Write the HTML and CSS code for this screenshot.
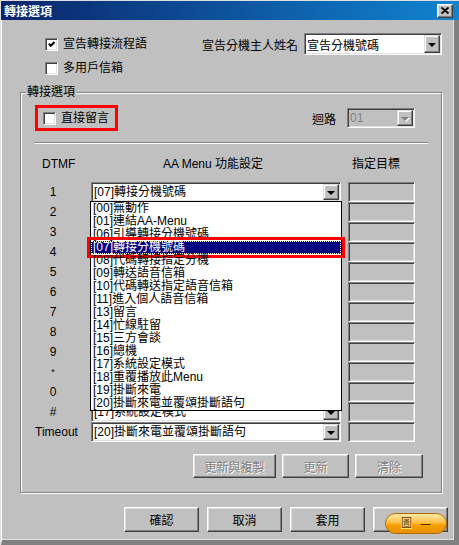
FILE: index.html
```html
<!DOCTYPE html>
<html lang="zh-Hant">
<head>
    <meta charset="UTF-8">
    <title>轉接選項</title>
    <link rel="stylesheet" href="styles.css">
</head>
<body>

    <div class="window">
        <div class="titlebar">
            <span>轉接選項</span>
            <span class="close-btn">
                <svg width="8" height="7" viewBox="0 0 8 7"><path d="M0.5 0.5L7.5 6.5M7.5 0.5L0.5 6.5" stroke="#000" stroke-width="1.8"/></svg>
            </span>
        </div>

        <div class="client">
            <div class="top-row">
                <label class="check">
                    <span class="box"><svg width="7" height="7" viewBox="0 0 7 7"><polyline points="0.8,2.8 2.8,4.8 6.5,1" fill="none" stroke="#000" stroke-width="2"/></svg></span>
                    宣告轉接流程語
                </label>
                <div class="name-field">
                    <span>宣告分機主人姓名</span>
                    <div class="combo combo-name">
                        <span class="combo-text">宣告分機號碼</span>
                        <span class="drop"><i class="arrow"></i></span>
                    </div>
                </div>
            </div>
            <div class="top-row2">
                <label class="check"><span class="box"></span>多用戶信箱</label>
            </div>

            <fieldset class="group">
                <legend>轉接選項</legend>

                <div class="opt-row">
                    <label class="check highlight"><span class="box"></span>直接留言</label>
                    <div class="loop">
                        <span>迴路</span>
                        <div class="combo combo-loop disabled">
                            <span class="combo-text">01</span>
                            <span class="drop"><i class="arrow"></i></span>
                        </div>
                    </div>
                </div>

                <div class="sep"></div>

                <div class="grid-head">
                    <span class="head-dtmf">DTMF</span>
                    <span class="head-menu">AA Menu 功能設定</span>
                    <span class="head-target">指定目標</span>
                </div>

                <div class="rows">
                    <div class="row"><span class="dtmf">1</span><div class="combo"><span class="combo-text">[07]轉接分機號碼</span><span class="drop"><i class="arrow"></i></span></div><span class="target"></span></div>
                    <div class="row"><span class="dtmf">2</span><div class="combo"><span class="combo-text">[00]無動作</span><span class="drop"><i class="arrow"></i></span></div><span class="target"></span></div>
                    <div class="row"><span class="dtmf">3</span><div class="combo"><span class="combo-text">[00]無動作</span><span class="drop"><i class="arrow"></i></span></div><span class="target"></span></div>
                    <div class="row"><span class="dtmf">4</span><div class="combo"><span class="combo-text">[00]無動作</span><span class="drop"><i class="arrow"></i></span></div><span class="target"></span></div>
                    <div class="row"><span class="dtmf">5</span><div class="combo"><span class="combo-text">[00]無動作</span><span class="drop"><i class="arrow"></i></span></div><span class="target"></span></div>
                    <div class="row"><span class="dtmf">6</span><div class="combo"><span class="combo-text">[00]無動作</span><span class="drop"><i class="arrow"></i></span></div><span class="target"></span></div>
                    <div class="row"><span class="dtmf">7</span><div class="combo"><span class="combo-text">[00]無動作</span><span class="drop"><i class="arrow"></i></span></div><span class="target"></span></div>
                    <div class="row"><span class="dtmf">8</span><div class="combo"><span class="combo-text">[00]無動作</span><span class="drop"><i class="arrow"></i></span></div><span class="target"></span></div>
                    <div class="row"><span class="dtmf">9</span><div class="combo"><span class="combo-text">[00]無動作</span><span class="drop"><i class="arrow"></i></span></div><span class="target"></span></div>
                    <div class="row"><span class="dtmf star">*</span><div class="combo"><span class="combo-text">[00]無動作</span><span class="drop"><i class="arrow"></i></span></div><span class="target"></span></div>
                    <div class="row"><span class="dtmf">0</span><div class="combo"><span class="combo-text">[00]無動作</span><span class="drop"><i class="arrow"></i></span></div><span class="target"></span></div>
                    <div class="row"><span class="dtmf">#</span><div class="combo"><span class="combo-text">[17]系統設定模式</span><span class="drop"><i class="arrow"></i></span></div><span class="target"></span></div>
                    <div class="row"><span class="dtmf">Timeout</span><div class="combo"><span class="combo-text">[20]掛斷來電並覆頌掛斷語句</span><span class="drop"><i class="arrow"></i></span></div><span class="target"></span></div>

                    <!-- opened dropdown of row 1 -->
                    <div class="menu-list">
                        <div>[00]無動作</div>
                        <div>[01]連結AA-Menu</div>
                        <div>[06]引導轉接分機號碼</div>
                        <div class="selected">[07]轉接分機號碼</div>
                        <div>[08]代碼轉接指定分機</div>
                        <div>[09]轉送語音信箱</div>
                        <div>[10]代碼轉送指定語音信箱</div>
                        <div>[11]進入個人語音信箱</div>
                        <div>[13]留言</div>
                        <div>[14]忙線駐留</div>
                        <div>[15]三方會談</div>
                        <div>[16]總機</div>
                        <div>[17]系統設定模式</div>
                        <div>[18]重覆播放此Menu</div>
                        <div>[19]掛斷來電</div>
                        <div>[20]掛斷來電並覆頌掛斷語句</div>
                    </div>
                </div>

                <div class="actions">
                    <button class="btn disabled w-copy">更新與複製</button>
                    <button class="btn disabled w-update">更新</button>
                    <button class="btn disabled w-clear">清除</button>
                </div>
            </fieldset>

            <div class="dialog-buttons">
                <button class="btn">確認</button>
                <button class="btn">取消</button>
                <button class="btn">套用</button>
                <button class="btn fig-btn"><span class="pill"><span class="pill-icon">圖</span>一</span></button>
            </div>
        </div>
    </div>

</body>
</html>
```

FILE: styles.css
```css
body {
    margin: 0;
    font-family: "Liberation Sans", "Noto Sans CJK TC", sans-serif;
    font-size: 12px;
    color: #000;
}
.window {
    width: 459px;
    height: 545px;
    box-sizing: border-box;
    border-top: 1px solid #dfdfdf;
    border-left: 1px solid #dfdfdf;
    background: #c0c0c0;
    display: flex;
    flex-direction: column;
}
.titlebar {
    flex: none;
    height: 19px;
    display: flex;
    align-items: center;
    justify-content: space-between;
    padding: 0 6px 0 3px;
    background: linear-gradient(to right, #0a246a, #1084d0);
    color: #fff;
    font-weight: bold;
}
.close-btn {
    width: 16px;
    height: 14px;
    box-sizing: border-box;
    display: flex;
    align-items: center;
    justify-content: center;
    background: #c0c0c0;
    border: 1px solid;
    border-color: #fff #404040 #404040 #fff;
    box-shadow: inset -1px -1px #808080, inset 1px 1px #dfdfdf;
}
.client {
    flex: 1;
    display: flex;
    flex-direction: column;
    border-left: 1px solid #fff;
    border-right: 5px solid #808080;
    border-bottom: 5px solid #808080;
    box-shadow: inset -1px -1px #dfdfdf;
}

/* checkbox + combo */
.check {
    display: flex;
    align-items: center;
    gap: 5px;
    line-height: 14px;
    white-space: nowrap;
}
.box {
    flex: none;
    width: 13px;
    height: 13px;
    box-sizing: border-box;
    display: flex;
    align-items: center;
    justify-content: center;
    background: #fff;
    border: 1px solid;
    border-color: #808080 #fff #fff #808080;
    box-shadow: inset 1px 1px #404040, inset -1px -1px #dfdfdf;
}
.combo {
    box-sizing: border-box;
    display: flex;
    align-items: stretch;
    background: #fff;
    border: 1px solid;
    border-color: #808080 #fff #fff #808080;
    box-shadow: inset 1px 1px #404040, inset -1px -1px #dfdfdf;
    padding: 1px;
    white-space: nowrap;
    overflow: hidden;
}
.combo-text {
    flex: 1;
    display: flex;
    align-items: center;
    padding-left: 1px;
    overflow: hidden;
}
.drop {
    flex: none;
    width: 16px;
    box-sizing: border-box;
    display: flex;
    align-items: center;
    justify-content: center;
    background: #c0c0c0;
    border: 1px solid;
    border-color: #dfdfdf #404040 #404040 #dfdfdf;
    box-shadow: inset -1px -1px #808080, inset 1px 1px #fff;
}
.arrow {
    width: 0;
    height: 0;
    border-left: 4px solid transparent;
    border-right: 4px solid transparent;
    border-top: 4px solid #000;
    margin-top: 1px;
}
.combo.disabled {
    background: #c0c0c0;
    color: #808080;
}
.combo.disabled .arrow {
    border-top-color: #808080;
    filter: drop-shadow(1px 1px 0 #fff);
}

/* top area */
.top-row {
    height: 22px;
    margin-top: 13px;
    padding: 0 12px 0 43px;
    display: flex;
    align-items: center;
    justify-content: space-between;
}
.name-field {
    display: flex;
    align-items: center;
    gap: 6px;
}
.combo-name {
    width: 138px;
    height: 22px;
}
.top-row2 {
    height: 14px;
    margin-top: 6px;
    padding-left: 43px;
    display: flex;
    align-items: center;
}

/* group box */
.group {
    margin: 9px 12px 0 18px;
    padding: 5px 18px 14px 14px;
    border: 1px solid #808080;
    box-shadow: inset 1px 1px #fff, 1px 1px #fff;
    min-width: 0;
}
.group legend {
    margin-left: -9px;
    padding: 0 1px;
    line-height: 16px;
    background: #c0c0c0;
}
.opt-row {
    height: 26px;
    padding-right: 8px;
    display: flex;
    align-items: center;
    justify-content: space-between;
}
.highlight {
    height: 20px;
    padding: 0 6px 0 5px;
    border: 3px solid #ff0000;
}
.loop {
    display: flex;
    align-items: center;
    gap: 11px;
}
.combo-loop {
    width: 68px;
    height: 20px;
}
.sep {
    margin: 11px -5px 0 0;
    border-top: 1px solid #808080;
    border-bottom: 1px solid #fff;
}
.grid-head,
.row {
    display: grid;
    grid-template-columns: 56px 257px 67px;
    height: 20px;
    line-height: 20px;
}
.grid-head {
    margin-top: 10px;
}
.head-dtmf {
    padding-left: 7px;
}
.head-menu {
    text-align: center;
    padding-right: 13px;
}
.head-target {
    padding-left: 4px;
}
.rows {
    position: relative;
    margin-top: 8px;
}
.dtmf {
    text-align: center;
    padding-right: 20px;
}
.star {
    font-size: 9px;
}
.row .combo {
    width: 250px;
    height: 20px;
}
.target {
    height: 20px;
    box-sizing: border-box;
    background: #c0c0c0;
    border: 1px solid;
    border-color: #808080 #fff #fff #808080;
    box-shadow: inset 1px 1px #404040, inset -1px -1px #dfdfdf;
}
.menu-list {
    position: absolute;
    left: 55px;
    top: 19px;
    width: 252px;
    box-sizing: border-box;
    border: 1px solid #000;
    background: #fff;
}
.menu-list div {
    position: relative;
    height: 13px;
    line-height: 13px;
    padding-left: 2px;
    white-space: nowrap;
}
.menu-list .selected {
    background: #000080;
    color: #fff;
    outline: 3px solid #ff0000;
    outline-offset: 1px;
}
.menu-list .selected::after {
    content: "";
    position: absolute;
    inset: 0;
    border: 1px dotted #ffffc0;
}

/* buttons */
.btn {
    position: relative;
    height: 24px;
    box-sizing: border-box;
    padding: 0;
    font: inherit;
    color: #000;
    background: #c0c0c0;
    border: 1px solid;
    border-color: #fff #404040 #404040 #fff;
    box-shadow: inset -1px -1px #808080, inset 1px 1px #dfdfdf;
}
.btn.disabled {
    color: #808080;
    text-shadow: 1px 1px #fff;
}
.actions {
    margin-top: 12px;
    display: flex;
    justify-content: flex-end;
    gap: 6px;
}
.w-copy {
    width: 83px;
}
.w-update {
    width: 67px;
}
.w-clear {
    width: 68px;
}
.dialog-buttons {
    margin-top: 14px;
    padding-right: 6px;
    display: flex;
    justify-content: flex-end;
    gap: 8px;
}
.dialog-buttons .btn {
    width: 75px;
    height: 25px;
}
.pill {
    position: absolute;
    left: 11px;
    top: 5px;
    width: 62px;
    height: 21px;
    box-sizing: border-box;
    display: flex;
    align-items: center;
    justify-content: center;
    gap: 8px;
    border: 1px solid #b06a00;
    border-radius: 11px;
    background: linear-gradient(#ffe8a8, #ffbf45 45%, #f5a000 60%, #e89000);
    color: #5a3300;
    font-size: 11px;
}
.pill-icon {
    background: #ffe27a;
    line-height: 11px;
}
```
